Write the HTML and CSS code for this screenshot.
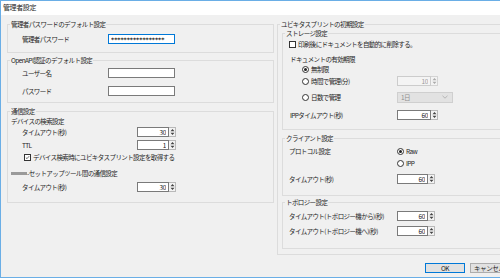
FILE: index.html
```html
<!DOCTYPE html>
<html lang="ja">
<head>
  <meta charset="UTF-8">
  <title>管理者設定</title>
  <link rel="stylesheet" href="styles.css">
</head>
<body>
  <div class="window">
    <div class="titlebar">管理者設定</div>
    <div class="dialog">
      <div class="col-left">
        <fieldset class="group g-admin">
          <legend>管理者パスワードのデフォルト設定</legend>
          <div class="group-body pad-l14">
            <div class="row mt5">
              <span class="label w86">管理者パスワード</span>
              <input class="text focus pw" type="text" value="*****************" readonly>
            </div>
          </div>
        </fieldset>
        <fieldset class="group g-openapi">
          <legend>OpenAPI認証のデフォルト設定</legend>
          <div class="group-body pad-l14">
            <div class="row mt3">
              <span class="label w86">ユーザー名</span>
              <input class="text" type="text" value="" readonly>
            </div>
            <div class="row mt8">
              <span class="label w86">パスワード</span>
              <input class="text" type="text" value="" readonly>
            </div>
          </div>
        </fieldset>
        <fieldset class="group g-comm">
          <legend>通信設定</legend>
          <div class="group-body pad-l3">
            <div class="row">デバイスの検索設定</div>
            <div class="row mt1 indent">
              <span class="label w115">タイムアウト(秒)</span>
              <span class="spin"><input class="num w32" type="text" value="30" readonly><span class="spin-btn"><svg width="5" height="8" viewBox="0 0 5 8"><path d="M0.5 3.2 L2.5 1 L4.5 3.2Z M0.5 4.8 L2.5 7 L4.5 4.8Z" fill="#444"/></svg></span></span>
            </div>
            <div class="row mt3 indent">
              <span class="label w115">TTL</span>
              <span class="spin"><input class="num w32" type="text" value="1" readonly><span class="spin-btn"><svg width="5" height="8" viewBox="0 0 5 8"><path d="M0.5 3.2 L2.5 1 L4.5 3.2Z M0.5 4.8 L2.5 7 L4.5 4.8Z" fill="#444"/></svg></span></span>
            </div>
            <div class="row mt2 cb-indent">
              <span class="check checked"><svg width="7" height="7" viewBox="0 0 7 7"><path d="M1.2 3.6 L2.8 5.2 L5.8 1.6" fill="none" stroke="#222" stroke-width="0.9"/></svg></span>
              <span class="cb-text">デバイス検索時にユビキタスプリント設定を取得する</span>
            </div>
            <div class="row mt6"><span class="redacted"></span>-セットアップツール間の通信設定</div>
            <div class="row mt4 indent">
              <span class="label w115">タイムアウト(秒)</span>
              <span class="spin"><input class="num w32" type="text" value="30" readonly><span class="spin-btn"><svg width="5" height="8" viewBox="0 0 5 8"><path d="M0.5 3.2 L2.5 1 L4.5 3.2Z M0.5 4.8 L2.5 7 L4.5 4.8Z" fill="#444"/></svg></span></span>
            </div>
          </div>
        </fieldset>
      </div>

      <div class="col-right">
        <fieldset class="group g-ubiq">
          <legend>ユビキタスプリントの初期設定</legend>
          <div class="group-body pad-l4">
            <fieldset class="group g-storage">
              <legend>ストレージ設定</legend>
              <div class="group-body pad-l6">
                <div class="row mt1">
                  <span class="check"></span>
                  <span class="cb-text">印刷後にドキュメントを自動的に削除する。</span>
                </div>
                <div class="row mt5 pad-l1">ドキュメントの有効期限</div>
                <div class="row radio-indent">
                  <span class="radio-item w95"><span class="radio on"></span>無制限</span>
                </div>
                <div class="row mt2 radio-indent">
                  <span class="radio-item w95"><span class="radio"></span>時間で管理(分)</span>
                  <span class="spin"><input class="num w34 disabled" type="text" value="10" readonly><span class="spin-btn off"><svg width="5" height="8" viewBox="0 0 5 8"><path d="M0.5 3.2 L2.5 1 L4.5 3.2Z M0.5 4.8 L2.5 7 L4.5 4.8Z" fill="#aaa"/></svg></span></span>
                </div>
                <div class="row mt6 radio-indent">
                  <span class="radio-item w95"><span class="radio"></span>日数で管理</span>
                  <span class="select">1日<svg width="6" height="4" viewBox="0 0 6 4"><path d="M0.5 0.8 L3 3.2 L5.5 0.8" fill="none" stroke="#aaa" stroke-width="0.8"/></svg></span>
                </div>
                <div class="row mt8 pad-l1">
                  <span class="label w107">IPPタイムアウト(秒)</span>
                  <span class="spin"><input class="num w34" type="text" value="60" readonly><span class="spin-btn"><svg width="5" height="8" viewBox="0 0 5 8"><path d="M0.5 3.2 L2.5 1 L4.5 3.2Z M0.5 4.8 L2.5 7 L4.5 4.8Z" fill="#444"/></svg></span></span>
                </div>
              </div>
            </fieldset>
            <fieldset class="group g-client">
              <legend>クライアント設定</legend>
              <div class="group-body pad-l6">
                <div class="proto mt3">
                  <span class="label w108">プロトコル設定</span>
                  <div class="radios">
                    <span class="radio-item"><span class="radio on"></span>Raw</span>
                    <span class="radio-item"><span class="radio"></span>IPP</span>
                  </div>
                </div>
                <div class="row mt6">
                  <span class="label w108">タイムアウト(秒)</span>
                  <span class="spin"><input class="num w31" type="text" value="60" readonly><span class="spin-btn"><svg width="5" height="8" viewBox="0 0 5 8"><path d="M0.5 3.2 L2.5 1 L4.5 3.2Z M0.5 4.8 L2.5 7 L4.5 4.8Z" fill="#444"/></svg></span></span>
                </div>
              </div>
            </fieldset>
            <fieldset class="group g-topo">
              <legend>トポロジー設定</legend>
              <div class="group-body pad-l6">
                <div class="row mt4">
                  <span class="label w108">タイムアウト(トポロジー機から)(秒)</span>
                  <span class="spin"><input class="num w31" type="text" value="60" readonly><span class="spin-btn"><svg width="5" height="8" viewBox="0 0 5 8"><path d="M0.5 3.2 L2.5 1 L4.5 3.2Z M0.5 4.8 L2.5 7 L4.5 4.8Z" fill="#444"/></svg></span></span>
                </div>
                <div class="row mt5">
                  <span class="label w108">タイムアウト(トポロジー機へ)(秒)</span>
                  <span class="spin"><input class="num w31" type="text" value="60" readonly><span class="spin-btn"><svg width="5" height="8" viewBox="0 0 5 8"><path d="M0.5 3.2 L2.5 1 L4.5 3.2Z M0.5 4.8 L2.5 7 L4.5 4.8Z" fill="#444"/></svg></span></span>
                </div>
              </div>
            </fieldset>
          </div>
        </fieldset>
        <div class="buttons">
          <button class="btn default">OK</button>
          <button class="btn">キャンセル</button>
        </div>
      </div>
    </div>
  </div>
</body>
</html>
```

FILE: styles.css
```css
html, body {
  margin: 0; padding: 0;
  width: 500px; height: 279px;
  overflow: hidden;
  background: #fff;
}
body {
  font-family: "Noto Sans CJK JP", "Noto Sans", sans-serif;
  font-size: 6.5px;
  letter-spacing: -0.6px;
  line-height: 10px;
  color: #1e1e1e;
}
* { box-sizing: border-box; }

.window {
  width: 560px; height: 278px;
  border: 1px solid #6aaee6;
  border-right: none;
  background: #f0f0f0;
}
.titlebar {
  height: 14px;
  background: #fff;
  padding-left: 2px;
  font-size: 7px;
  letter-spacing: -0.4px;
  line-height: 13px;
}
.dialog {
  display: flex;
  gap: 3px;
  padding: 4px 0 0 6px;
}
.col-left {
  width: 267px;
  display: flex;
  flex-direction: column;
}
.col-right {
  width: 240px;
  display: flex;
  flex-direction: column;
}

/* group boxes */
.group {
  margin: 0; padding: 0;
  border: 1px solid #dcdcdc;
  min-width: 0;
}
.group legend {
  margin-left: 2px;
  padding: 0 1px;
  line-height: 10px;
}
.g-admin { height: 34px; }
.g-openapi { height: 48px; margin-top: 2px; }
.g-comm { height: 97px; margin-top: 3px; }
.g-ubiq { height: 236px; }
.g-storage { height: 102px; margin-top: -1px; }
.g-client { height: 63px; margin-top: 3px; }
.g-topo { height: 52px; margin-top: 1px; }

.pad-l1 { padding-left: 1px; }
.pad-l3 { padding-left: 3px; }
.pad-l4 { padding-left: 4px; }
.pad-l6 { padding-left: 6px; }
.pad-l14 { padding-left: 14px; }
.mt1 { margin-top: 1px; }
.mt2 { margin-top: 2px; }
.mt3 { margin-top: 3px; }
.mt4 { margin-top: 4px; }
.mt5 { margin-top: 5px; }
.mt6 { margin-top: 6px; }
.mt8 { margin-top: 8px; }

.row {
  display: flex;
  align-items: center;
  height: 10px;
  white-space: nowrap;
}
.indent { padding-left: 11px; }
.cb-indent { padding-left: 13px; }
.radio-indent { padding-left: 13px; }

.label { flex-shrink: 0; white-space: nowrap; }
.w86 { width: 86px; }
.w95 { width: 95px; }
.w107 { width: 107px; }
.w108 { width: 108px; }
.w115 { width: 115px; }

/* text boxes */
.text, .num {
  height: 10px;
  margin: 0;
  padding: 0 2px;
  border: 1px solid #7a7a7a;
  background: #fff;
  font-family: inherit;
  font-size: 6.5px;
  letter-spacing: -0.3px;
  color: #222;
  outline: none;
}
.text { width: 67px; }
.text.focus { border-color: #0078d7; }
.text.pw { font-family: "DejaVu Sans", sans-serif; font-weight: 700; font-size: 6px; letter-spacing: 0; color: #111; }
.num { text-align: right; padding-right: 2px; }
.num.disabled { border-color: #cccccc; background: #f4f4f4; color: #9a9a9a; }
.w31 { width: 31px; }
.w32 { width: 32px; }
.w34 { width: 34px; }

.spin { display: flex; align-items: center; }
.spin-btn {
  width: 7px; height: 10px;
  border: 1px solid #b9b9b9;
  border-left: none;
  background: #f3f3f3;
  display: flex; align-items: center; justify-content: center;
}
.spin-btn.off { border-color: #d4d4d4; }

.select {
  width: 56px; height: 11px;
  border: 1px solid #cfcfcf;
  background: #e2e2e2;
  color: #8f8f8f;
  padding: 0 4px 0 3px;
  display: flex; align-items: center; justify-content: space-between;
  line-height: 9px;
}

/* check boxes and radios */
.check {
  width: 7px; height: 7px;
  border: 1px solid #333;
  background: #fff;
  display: inline-flex; align-items: center; justify-content: center;
  flex-shrink: 0;
}
.check svg { display: block; }
.cb-text { margin-left: 2px; }

.radio-item {
  display: flex;
  align-items: center;
  height: 10px;
  white-space: nowrap;
}
.radio {
  width: 7px; height: 7px;
  border: 1px solid #333;
  border-radius: 50%;
  background: #fff;
  margin-right: 2px;
  flex-shrink: 0;
  display: inline-flex; align-items: center; justify-content: center;
}
.radio.on::after {
  content: "";
  width: 3px; height: 3px;
  border-radius: 50%;
  background: #222;
}

.proto { display: flex; align-items: flex-start; }
.radios { display: flex; flex-direction: column; gap: 2px; }

.redacted {
  display: inline-block;
  width: 16px; height: 3px;
  background: #9a9a9a;
}

/* buttons */
.buttons {
  display: flex;
  gap: 5px;
  margin-top: 8px;
  padding-left: 148px;
}
.btn {
  height: 10px;
  padding: 0;
  border: 1px solid #adadad;
  background: #e1e1e1;
  font-family: inherit;
  font-size: 6.5px;
  letter-spacing: -0.4px;
  line-height: 8px;
  color: #222;
}
.btn.default { width: 40px; border-color: #0078d7; }
.btn:not(.default) { width: 46px; text-align: left; padding-left: 3px; }
```
